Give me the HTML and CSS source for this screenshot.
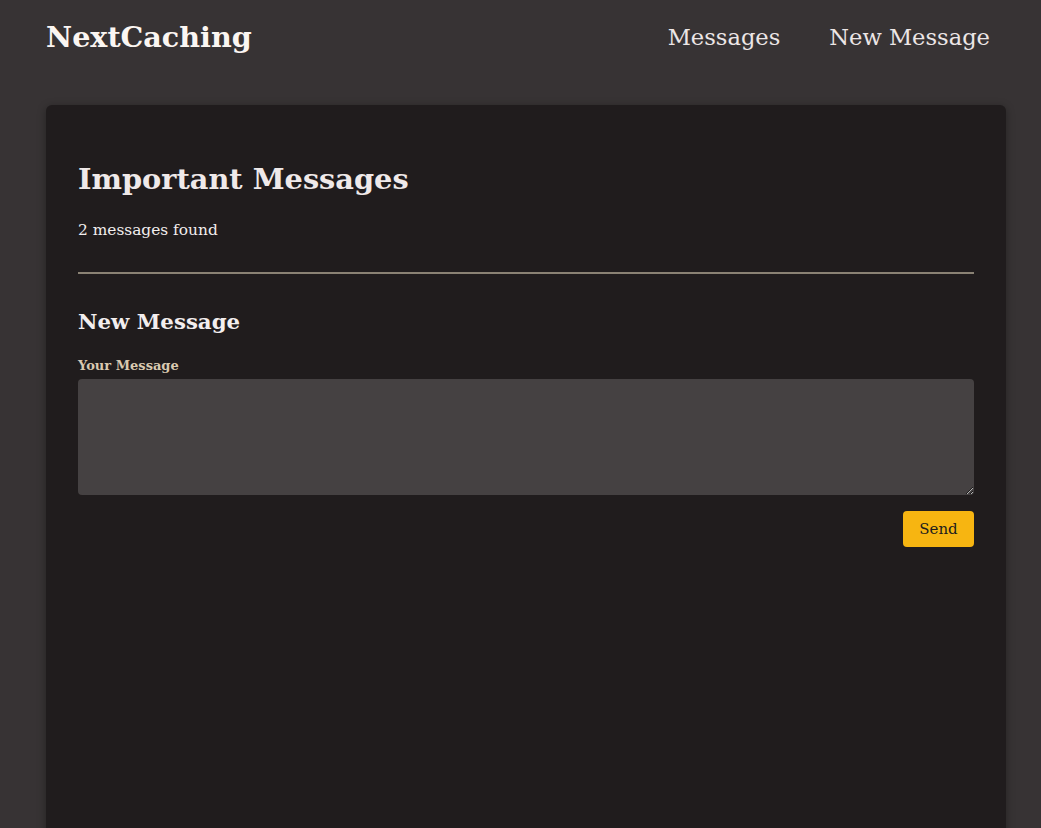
FILE: index.html
```html
<!DOCTYPE html>
<html lang="en">
<head>
<meta charset="utf-8">
<title>NextCaching</title>
<link rel="stylesheet" href="styles.css">
</head>
<body>
<header class="site-header">
  <a class="logo" href="#">NextCaching</a>
  <nav class="nav">
    <a href="#">Messages</a>
    <a href="#">New Message</a>
  </nav>
</header>
<main class="card">
  <h1 class="title">Important Messages</h1>
  <p class="count">2 messages found</p>
  <hr class="divider">
  <h2 class="subtitle">New Message</h2>
  <form class="form">
    <label class="label" for="msg">Your Message</label>
    <textarea id="msg" class="textarea"></textarea>
    <div class="actions">
      <button type="button" class="btn">Send</button>
    </div>
  </form>
</main>
</body>
</html>
```
FILE: styles.css
```css
html, body {
  margin: 0;
  padding: 0;
}
body {
  background: #373334;
  color: #f2eeee;
  font-family: "DejaVu Serif", "Liberation Serif", serif;
  height: 828px;
  overflow: hidden;
}
.site-header {
  display: flex;
  align-items: center;
  justify-content: space-between;
  padding: 0 51px 0 46px;
  height: 74px;
}
.logo {
  color: #fbf6f2;
  font-weight: bold;
  font-size: 28.6px;
  text-decoration: none;
}
.nav {
  display: flex;
  gap: 49px;
}
.nav a {
  color: #ece6e6;
  text-decoration: none;
  font-size: 22.6px;
}
.card {
  margin: 31px 35px 0 46px;
  background: #201c1d;
  border-radius: 6px;
  box-shadow: 0 2px 8px rgba(0,0,0,0.35);
  padding: 52px 32px 300px;
}
.title {
  margin: 0;
  font-size: 28.8px;
  line-height: 44px;
  font-weight: bold;
  color: #efe9e9;
}
.count {
  margin: 19px 0 0;
  font-size: 15.4px;
  line-height: 20px;
}
.divider {
  border: 0;
  height: 2px;
  background: #8a8274;
  margin: 32px 0 0;
}
.subtitle {
  margin: 32px 0 0;
  font-size: 21.3px;
  line-height: 32px;
  color: #f3eeee;
}
.form {
  display: flex;
  flex-direction: column;
}
.label {
  margin-top: 19px;
  font-size: 13px;
  font-weight: bold;
  color: #d9c9b0;
  line-height: 18px;
}
.textarea {
  margin-top: 4px;
  height: 116px;
  box-sizing: border-box;
  background: #454142;
  border: 0;
  border-radius: 4px;
  color: #f2eeee;
  font-family: inherit;
  resize: vertical;
}
.actions {
  display: flex;
  justify-content: flex-end;
  margin-top: 16px;
}
.btn {
  background: #f7b511;
  color: #201c1d;
  border: 0;
  border-radius: 4px;
  width: 71px;
  height: 36px;
  font-family: inherit;
  font-size: 15px;
  cursor: pointer;
}
```
